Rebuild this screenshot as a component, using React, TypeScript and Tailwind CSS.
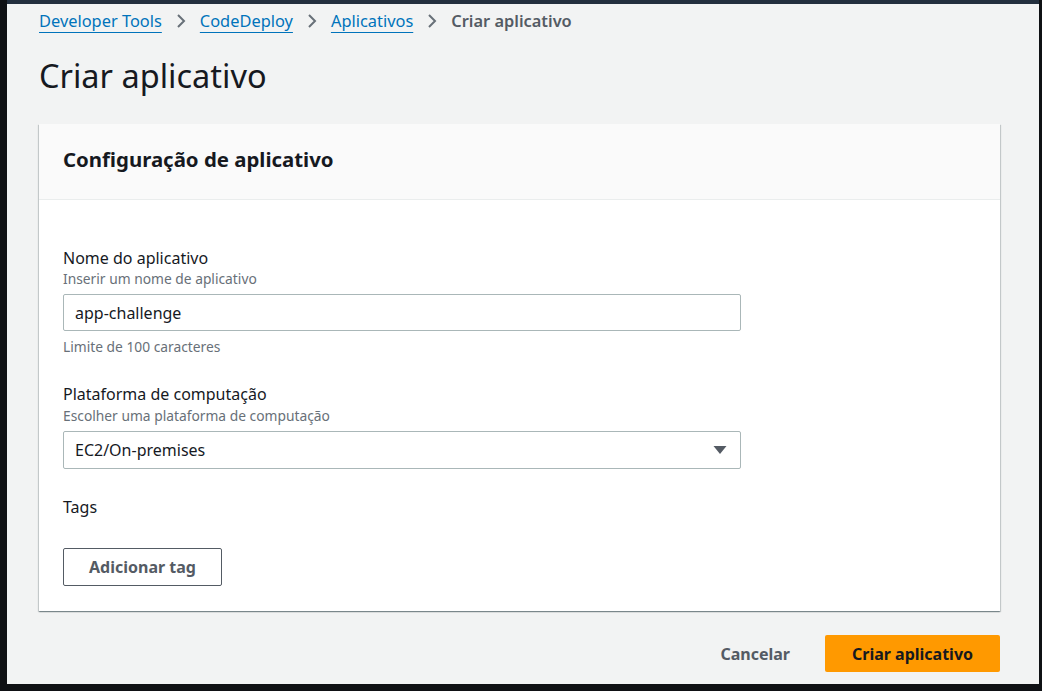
import { useState } from 'react';

const crumbs = ['Developer Tools', 'CodeDeploy', 'Aplicativos'];

function Chevron() {
  return (
    <svg width="12" height="16" viewBox="0 0 12 16" className="mx-[13px]">
      <path d="M3 2 L9 8 L3 14" fill="none" stroke="#687078" strokeWidth="2" />
    </svg>
  );
}

export default function App() {
  const [name, setName] = useState('app-challenge');

  return (
    <div
      className="flex h-[691px] w-full bg-[#0f1114] pl-[7px] pr-[3px] pb-[7px]"
      style={{ fontFamily: '"Noto Sans", "Open Sans", Arial, sans-serif' }}
    >
      <div className="flex flex-1 flex-col overflow-hidden">
        <div className="h-[4px] shrink-0 bg-[#232f3e]" />
        <div className="flex-1 bg-[#f2f3f3] pl-[32px] pr-[39px]">
          {/* breadcrumbs */}
          <nav className="flex items-center pt-[6px] text-[16.4px] leading-[22px]">
            {crumbs.map((c) => (
              <span key={c} className="flex items-center">
                <a className="text-[#0073bb] underline decoration-1 underline-offset-[5px]">{c}</a>
                <Chevron />
              </span>
            ))}
            <span className="font-semibold text-[#545b64]">Criar aplicativo</span>
          </nav>

          <h1 className="mt-[26px] text-[32.5px] leading-[36px] text-[#16191f]">Criar aplicativo</h1>

          {/* card */}
          <div className="mt-[30px] bg-white shadow-[0_1px_1px_0_rgba(0,28,36,0.3),1px_1px_1px_0_rgba(0,28,36,0.15),-1px_1px_1px_0_rgba(0,28,36,0.15)]">
            <div className="border-b border-[#eaeded] bg-[#fafafa] px-[24px] pt-[21px] pb-[26px]">
              <h2 className="text-[20.4px] font-bold leading-[28px] text-[#16191f]">Configuração de aplicativo</h2>
            </div>
            <div className="px-[24px] pt-[47px] pb-[25px]">
              <div className="text-[16px] leading-[22px] text-[#16191f]">Nome do aplicativo</div>
              <div className="mt-[1px] text-[13.8px] leading-[18px] text-[#687078]">Inserir um nome de aplicativo</div>
              <input
                value={name}
                onChange={(e) => setName(e.target.value)}
                className="mt-[6px] block h-[37px] w-[678px] rounded-[2px] border border-[#aab7b8] bg-white px-[11px] text-[16px] text-[#16191f] outline-none"
              />
              <div className="mt-[7px] text-[13.8px] leading-[18px] text-[#687078]">Limite de 100 caracteres</div>

              <div className="mt-[27px] text-[16px] leading-[22px] text-[#16191f]">Plataforma de computação</div>
              <div className="mt-[2px] text-[13.8px] leading-[18px] text-[#687078]">Escolher uma plataforma de computação</div>
              <div className="mt-[6px] flex h-[38px] w-[678px] items-center justify-between rounded-[2px] border border-[#aab7b8] bg-white pl-[11px] pr-[13px] text-[16px] text-[#16191f]">
                <span>EC2/On-premises</span>
                <svg width="14" height="10" viewBox="0 0 14 10">
                  <path d="M0.5 1 L13.5 1 L7 9 Z" fill="#545b64" />
                </svg>
              </div>

              <div className="mt-[27px] text-[16px] leading-[22px] text-[#16191f]">Tags</div>
              <button className="mt-[30px] h-[38px] w-[159px] rounded-[2px] border border-[#545b64] bg-white text-[16px] font-bold text-[#545b64]">
                Adicionar tag
              </button>
            </div>
          </div>

          {/* footer actions */}
          <div className="mt-[24px] flex items-center justify-end">
            <button className="mr-[21px] px-[14px] text-[16px] font-bold text-[#545b64]">Cancelar</button>
            <button className="h-[37px] w-[175px] rounded-[2px] bg-[#ff9900] text-[16px] font-bold text-[#16191f]">
              Criar aplicativo
            </button>
          </div>
        </div>
      </div>
    </div>
  );
}
